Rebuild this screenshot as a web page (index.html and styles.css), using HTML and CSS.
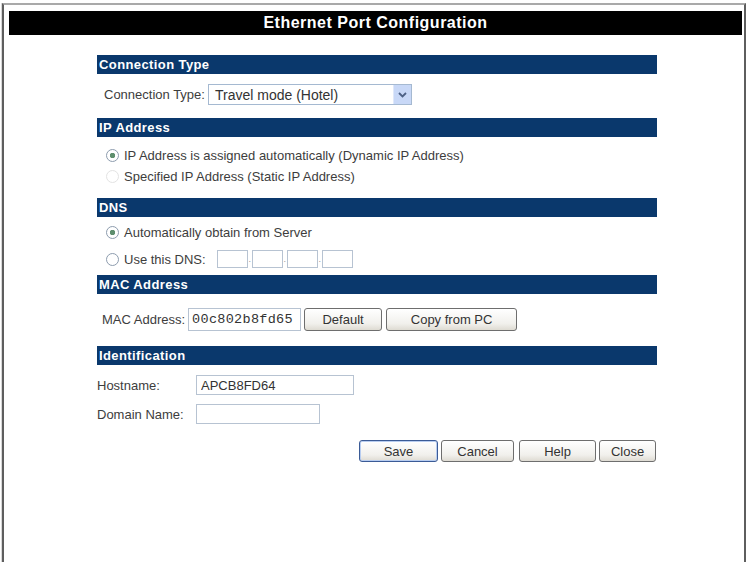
FILE: index.html
```html
<!DOCTYPE html>
<html lang="en">
<head>
    <meta charset="UTF-8">
    <meta name="viewport" content="width=device-width, initial-scale=1.0">
    <title>Ethernet Port Configuration</title>
    <link rel="stylesheet" href="styles.css">
</head>
<body>
    <div class="frame">
        <div class="titlebar">Ethernet Port Configuration</div>

        <form class="config" id="ethernetForm">
            <div class="group">
                <div class="group-head">Connection Type</div>
                <div class="group-body body-conn">
                    <div class="row">
                        <span class="label">Connection Type:</span>
                        <span class="select">
                            <span class="select-text">Travel mode (Hotel)</span>
                            <span class="select-btn">
                                <svg width="9" height="6" viewBox="0 0 9 6"><path d="M1 1l3.5 3.5L8 1" fill="none" stroke="#4d6185" stroke-width="1.8"/></svg>
                            </span>
                        </span>
                    </div>
                </div>
            </div>

            <div class="group">
                <div class="group-head">IP Address</div>
                <div class="group-body body-ip">
                    <label class="radio-row"><input type="radio" name="ipmode" checked> IP Address is assigned automatically (Dynamic IP Address)</label>
                    <label class="radio-row"><input type="radio" name="ipmode" disabled> Specified IP Address (Static IP Address)</label>
                </div>
            </div>

            <div class="group">
                <div class="group-head">DNS</div>
                <div class="group-body body-dns">
                    <label class="radio-row"><input type="radio" name="dns" checked> Automatically obtain from Server</label>
                    <label class="radio-row dns-row"><input type="radio" name="dns"> Use this DNS:
                        <span class="octets">
                            <input type="text" class="octet"><span class="dot">.</span><input type="text" class="octet"><span class="dot">.</span><input type="text" class="octet"><span class="dot">.</span><input type="text" class="octet">
                        </span>
                    </label>
                </div>
            </div>

            <div class="group">
                <div class="group-head">MAC Address</div>
                <div class="group-body body-mac">
                    <div class="row">
                        <span class="label">MAC Address:</span>
                        <input type="text" class="field mac" value="00c802b8fd65">
                        <button type="button" class="btn btn-mac">Default</button>
                        <button type="button" class="btn btn-copy">Copy from PC</button>
                    </div>
                </div>
            </div>

            <div class="group">
                <div class="group-head">Identification</div>
                <div class="group-body body-ident">
                    <div class="row">
                        <span class="label label-fixed">Hostname:</span>
                        <input type="text" class="field host" value="APCB8FD64">
                    </div>
                    <div class="row">
                        <span class="label label-fixed">Domain Name:</span>
                        <input type="text" class="field domain">
                    </div>
                </div>
            </div>

            <div class="actions">
                <button type="submit" class="btn btn-default btn-save">Save</button>
                <button type="button" class="btn btn-cancel">Cancel</button>
                <button type="button" class="btn btn-help">Help</button>
                <button type="button" class="btn btn-close">Close</button>
            </div>
        </form>
    </div>
</body>
</html>
```

FILE: styles.css
```css
body {
    margin: 0;
    background-color: #fff;
    font-family: 'Liberation Sans', Arial, sans-serif;
    font-size: 13px;
    color: #3d3d3d;
}

html, body {
    height: 100%;
    overflow: hidden;
}

.frame {
    box-sizing: border-box;
    margin: 3px 2px 0 2px;
    height: calc(100% - 3px);
    border: 2px solid #5e5e5e;
    border-top-color: #a9a9a9;
    border-bottom: none;
    box-shadow: inset -1px 0 0 #fff, -1px 0 0 #d8d8d8;
    padding-top: 6px;
}

.titlebar {
    margin: 0 2px 0 5px;
    height: 24px;
    line-height: 24px;
    background-color: #000;
    color: #fff;
    text-align: center;
    font-weight: 700;
    font-size: 16px;
    letter-spacing: 0.5px;
}

.config {
    width: 560px;
    margin: 20px 0 0 93px;
}

.group-head {
    height: 19px;
    line-height: 19px;
    padding-left: 2px;
    background-color: #0a386c;
    color: #fff;
    font-weight: 700;
    font-size: 13px;
    letter-spacing: 0.4px;
}

.group-body {
    display: flex;
    flex-direction: column;
}

.body-conn {
    padding: 10px 0 13px 7px;
}

.body-ip {
    padding: 8px 0 11px 9px;
}

.body-dns {
    padding: 5px 0 4px 9px;
    gap: 4px;
}

.body-mac {
    padding: 14px 0 15px 5px;
}

.body-ident {
    padding: 10px 0 0 0;
    gap: 9px;
}

.row {
    display: flex;
    align-items: center;
}

.label {
    margin-right: 3px;
}

.label-fixed {
    width: 99px;
    margin-right: 0;
}

/* dropdown drawn like the XP combo box */
.select {
    display: flex;
    align-items: center;
    width: 204px;
    height: 21px;
    box-sizing: border-box;
    border: 1px solid #a5b9d1;
    background-color: #fff;
}

.select-text {
    flex: 1;
    padding-left: 6px;
    font-size: 14px;
    color: #333;
}

.select-btn {
    display: flex;
    align-items: center;
    justify-content: center;
    width: 17px;
    height: 19px;
    background-color: #c8d8f7;
    border-left: 1px solid #dfe8fa;
}

.radio-row {
    display: flex;
    align-items: center;
    height: 21px;
}

.dns-row {
    height: 24px;
}

input[type="radio"] {
    appearance: none;
    -webkit-appearance: none;
    width: 13px;
    height: 13px;
    margin: 0 5px 0 0;
    border: 1px solid #8d9cae;
    border-radius: 50%;
    background-color: #fff;
    box-sizing: border-box;
}

input[type="radio"]:checked {
    background: radial-gradient(circle, #5f8f6e 0 2.5px, #fff 3px);
}

input[type="radio"]:disabled {
    border-color: #e3e3e3;
}

.octets {
    display: flex;
    align-items: center;
    margin-left: 11px;
}

.octet {
    width: 31px;
    height: 18px;
    box-sizing: border-box;
    border: 1px solid #b7c3d2;
    padding: 0;
}

.dot {
    width: 4px;
    text-align: center;
    font-size: 9px;
    color: #999;
}

.field {
    height: 20px;
    box-sizing: border-box;
    border: 1px solid #b7c3d2;
    padding: 0 4px;
    font-family: 'Liberation Sans', Arial, sans-serif;
    font-size: 13px;
    color: #333;
}

.mac {
    width: 113px;
    height: 23px;
    padding: 0 3px;
    font-family: 'Liberation Mono', 'Courier New', monospace;
    font-size: 13.5px;
    letter-spacing: 0.3px;
}

.host {
    width: 158px;
}

.domain {
    width: 124px;
}

.btn {
    height: 22px;
    box-sizing: border-box;
    border: 1px solid #6e6e6e;
    border-radius: 3px;
    background: linear-gradient(#ffffff, #f1f0ec 70%, #dedbd2);
    font-family: 'Liberation Sans', Arial, sans-serif;
    font-size: 13px;
    color: #333;
    padding: 0;
    cursor: pointer;
}

.btn-mac {
    width: 78px;
    height: 23px;
    margin-left: 3px;
}

.btn-copy {
    width: 131px;
    height: 23px;
    margin-left: 4px;
}

.actions {
    display: flex;
    justify-content: flex-end;
    gap: 3px;
    margin-top: 16px;
    padding-right: 1px;
}

.btn-default {
    border-color: #3b5b96;
    box-shadow: inset 0 0 0 1px #b8cdf0;
}

.btn-save {
    width: 79px;
}

.btn-cancel {
    width: 73px;
}

.btn-help {
    width: 77px;
    margin-left: 2px;
}

.btn-close {
    width: 57px;
}
```
